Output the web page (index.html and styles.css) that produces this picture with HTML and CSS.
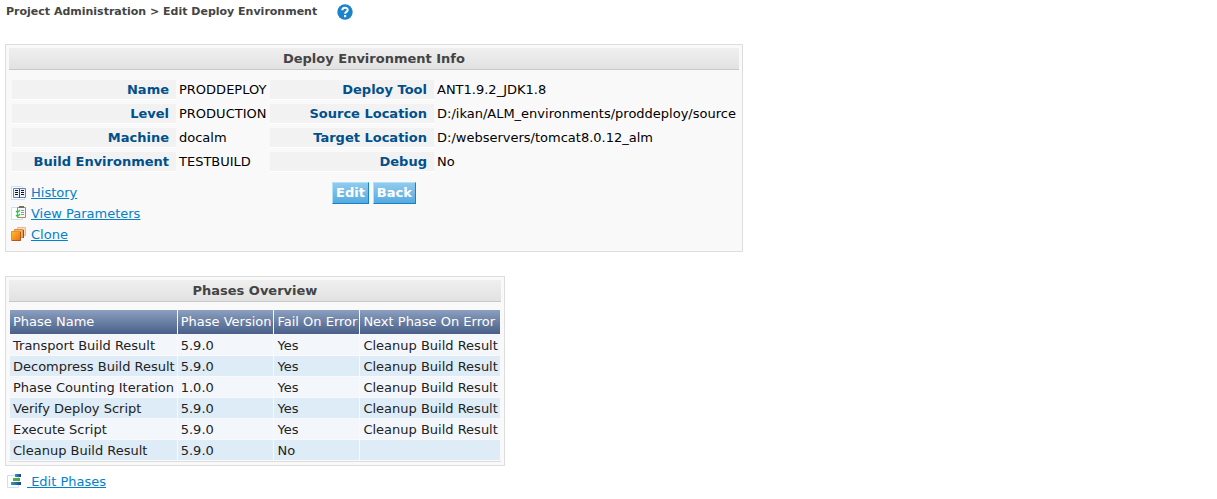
FILE: index.html
```
<!DOCTYPE html>
<html lang="en">
<head>
<meta charset="utf-8">
<title>Edit Deploy Environment</title>
<link rel="stylesheet" href="styles.css">
</head>
<body>
<header class="breadcrumb">
  <h1 class="breadcrumb-text">Project Administration &gt; Edit Deploy Environment</h1>
  <a class="help" href="#help" aria-label="Help">
    <svg width="16" height="16" viewBox="0 0 16 16"><circle cx="8" cy="8" r="7.7" fill="#1b82cc"/><path d="M5.300 6.200C5.300 2.800 10.900 2.900 10.700 6.100C10.600 7.800 8.200 8 8.100 9.700" fill="none" stroke="#fff" stroke-width="2"/><rect x="7" y="11" width="2.200" height="2.200" fill="#fff"/></svg>
  </a>
</header>

<main>
  <section class="panel">
    <h2 class="panel-title">Deploy Environment Info</h2>
    <table class="info">
      <tr><th scope="row">Name</th><td class="short">PRODDEPLOY</td><th scope="row">Deploy Tool</th><td>ANT1.9.2_JDK1.8</td></tr>
      <tr><th scope="row">Level</th><td class="short">PRODUCTION</td><th scope="row">Source Location</th><td>D:/ikan/ALM_environments/proddeploy/source</td></tr>
      <tr><th scope="row">Machine</th><td class="short">docalm</td><th scope="row">Target Location</th><td>D:/webservers/tomcat8.0.12_alm</td></tr>
      <tr><th scope="row">Build Environment</th><td class="short">TESTBUILD</td><th scope="row">Debug</th><td>No</td></tr>
    </table>
    <div class="actions">
      <nav class="links">
        <a class="link" href="#history">
          <svg width="16" height="16" viewBox="0 0 16 16"><path d="M.5 1.500h10l3 3v10H.5z" fill="#fff" stroke="#c9e2f1"/><path d="M2.500 3.500h12v9h-12z" fill="#eef1f8" stroke="#5f7fc0"/><path d="M8.500 4v9" stroke="#444"/><path d="M4 5.500h3M4 7.500h3M4 9.500h3M10 5.500h3M10 7.500h3M10 9.500h3" stroke="#111"/></svg>
          <span class="link-text">History</span>
        </a>
        <a class="link" href="#parameters">
          <svg width="16" height="16" viewBox="0 0 16 16"><path d="M.5 1.500h11v12H.5z" fill="#fff" stroke="#c9e2f1"/><path d="M6.500 1.500h8v10h-8z" fill="#f5f8fa" stroke="#b08a45"/><path d="M8 0h5v2H8z" fill="#6b7078"/><path d="M10 4.500h3M10 6.500h3M10 8.500h3" stroke="#8799aa"/><path d="M5 5l1.500 1.500L9 4M5 9l1.500 1.500L9 8" fill="none" stroke="#35c146" stroke-width="1.300"/></svg>
          <span class="link-text">View Parameters</span>
        </a>
        <a class="link" href="#clone">
          <svg width="16" height="16" viewBox="0 0 16 16"><defs><linearGradient id="cube" x2="1" y2="1"><stop stop-color="#ffc020"/><stop offset="1" stop-color="#ec6c1c"/></linearGradient></defs><path d="M6.500 .5h8v8h-8z" fill="#fbdcb5" stroke="#e8b989"/><path d="M3.500 2.500h8.500v8H3.500z" fill="#f3b36e" stroke="#cf8d55"/><path d="M12.500 3v8" stroke="#8d5134"/><path d="M.5 4.500h9v9h-9z" fill="url(#cube)" stroke="#ee8d20"/><path d="M9.500 5v8.500H1" fill="none" stroke="#b9561c"/></svg>
          <span class="link-text">Clone</span>
        </a>
      </nav>
      <div class="buttons">
        <button class="button" type="button">Edit</button>
        <button class="button" type="button">Back</button>
      </div>
    </div>
  </section>

  <section class="panel">
    <h2 class="panel-title">Phases Overview</h2>
    <div class="phases-wrap">
      <table class="phases">
        <thead><tr><th scope="col">Phase Name</th><th scope="col">Phase Version</th><th scope="col">Fail On Error</th><th scope="col">Next Phase On Error</th></tr></thead>
        <tbody>
          <tr><td>Transport Build Result</td><td>5.9.0</td><td>Yes</td><td>Cleanup Build Result</td></tr>
          <tr><td>Decompress Build Result</td><td>5.9.0</td><td>Yes</td><td>Cleanup Build Result</td></tr>
          <tr><td>Phase Counting Iteration</td><td>1.0.0</td><td>Yes</td><td>Cleanup Build Result</td></tr>
          <tr><td>Verify Deploy Script</td><td>5.9.0</td><td>Yes</td><td>Cleanup Build Result</td></tr>
          <tr><td>Execute Script</td><td>5.9.0</td><td>Yes</td><td>Cleanup Build Result</td></tr>
          <tr><td>Cleanup Build Result</td><td>5.9.0</td><td>No</td><td></td></tr>
        </tbody>
      </table>
    </div>
  </section>

  <a class="link edit-phases" href="#phases">
    <svg width="16" height="16" viewBox="0 0 16 16"><defs><linearGradient id="bar" x2="1" y2="0"><stop stop-color="#2f9fb5"/><stop offset="1" stop-color="#1c3f94"/></linearGradient></defs><path d="M.5 1.500h11v12H.5z" fill="#fff" stroke="#c9e2f1"/><path d="M8 0h6v3H8z" fill="url(#bar)"/><path d="M6 4h7v3H6z" fill="#4fae48"/><path d="M4 8h10v3H4z" fill="url(#bar)"/></svg>
    <span class="link-text">&nbsp;Edit Phases</span>
  </a>
</main>
</body>
</html>
```
FILE: styles.css
```
body {
  margin: 4px 5px;
  background: #fff;
  color: #000;
  font: 13px/16px Verdana, "DejaVu Sans", sans-serif;
}

.breadcrumb {
  display: flex;
  align-items: center;
  gap: 20px;
  padding-left: 1px;
}

.breadcrumb-text {
  margin: 0;
  color: #444;
  font-size: 11px;
  line-height: 16px;
}

.help,
.help svg {
  display: block;
}

.panel {
  box-sizing: border-box;
  width: fit-content;
  margin-top: 24px;
  padding: 3px;
  border: 1px solid #ddd;
  background: #f9f9f9;
}

.panel-title {
  margin: 0;
  padding: 3px 0 2px;
  border-bottom: 1px solid #c8c8c8;
  background: linear-gradient(#efefef, #e2e2e2);
  color: #444;
  font-size: 13px;
  line-height: 16px;
  text-align: center;
}

.info {
  margin-top: 6px;
  border-spacing: 3px 4px;
}

.info th {
  box-sizing: border-box;
  width: 164px;
  padding: 2px 7px 1px 0;
  border-bottom: 1px solid #fff;
  background: #f2f2f2;
  color: #00508c;
  text-align: right;
  white-space: nowrap;
}

.info td {
  padding: 0;
}

.info .short {
  min-width: 88px;
}

.actions {
  display: grid;
  grid-template-columns: 1fr auto 1fr;
  align-items: start;
  padding: 6px 2px 3px;
}

.links {
  display: grid;
  justify-items: start;
}

.link {
  display: flex;
  align-items: center;
  gap: 4px;
  width: fit-content;
  color: #0082cc;
  line-height: 21px;
  text-decoration: none;
}

.link-text {
  text-decoration: underline;
}

.buttons {
  display: flex;
  gap: 4px;
}

.button {
  height: 22px;
  padding: 0 3px;
  border: 1px solid;
  border-color: #aee4fa #1583c8 #1583c8 #aee4fa;
  border-radius: 0;
  background: linear-gradient(#92caed, #55abe0);
  color: #fff;
  font: bold 13px/20px Verdana, "DejaVu Sans", sans-serif;
}

.phases-wrap {
  padding: 7px 0 0;
  border-bottom: 1px solid #ddd;
}

.phases {
  border-spacing: 1px;
  color: #222;
}

.phases th {
  height: 24px;
  padding: 0 2px 0 3px;
  background: linear-gradient(#8c9fbf, #485f88);
  color: #fff;
  font-weight: normal;
  text-align: left;
  white-space: nowrap;
}

.phases td {
  height: 18px;
  padding: 2px 2px 0 3px;
  background: #f3f7fc;
  white-space: nowrap;
}

.phases tr:nth-child(even) td {
  background: #deecf7;
}

.edit-phases {
  margin: 5px 0 0 2px;
}
```
